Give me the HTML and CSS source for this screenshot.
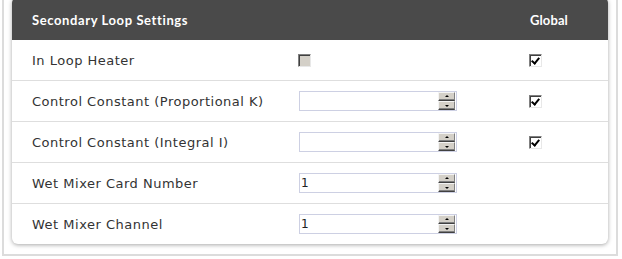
FILE: index.html
```html
<!DOCTYPE html>
<html lang="en">
<head>
  <meta charset="UTF-8" />
  <title>Secondary Loop Settings</title>
  <link rel="stylesheet" href="styles.css">
</head>
<body>

<div class="frame">
  <div class="card">
    <div class="row head">
      <div class="cell label">Secondary Loop Settings</div>
      <div class="cell"></div>
      <div class="cell global">Global</div>
    </div>

    <div class="row">
      <div class="cell label">In Loop Heater</div>
      <div class="cell"><span class="check disabled"></span></div>
      <div class="cell global"><span class="check checked"></span></div>
    </div>

    <div class="row">
      <div class="cell label">Control Constant (Proportional K)</div>
      <div class="cell">
        <div class="spin"><span class="val"></span><span class="btns"><i class="up"></i><i class="down"></i></span></div>
      </div>
      <div class="cell global"><span class="check checked"></span></div>
    </div>

    <div class="row">
      <div class="cell label">Control Constant (Integral I)</div>
      <div class="cell">
        <div class="spin"><span class="val"></span><span class="btns"><i class="up"></i><i class="down"></i></span></div>
      </div>
      <div class="cell global"><span class="check checked"></span></div>
    </div>

    <div class="row">
      <div class="cell label">Wet Mixer Card Number</div>
      <div class="cell">
        <div class="spin"><span class="val">1</span><span class="btns"><i class="up"></i><i class="down"></i></span></div>
      </div>
      <div class="cell global"></div>
    </div>

    <div class="row last">
      <div class="cell label">Wet Mixer Channel</div>
      <div class="cell">
        <div class="spin"><span class="val">1</span><span class="btns"><i class="up"></i><i class="down"></i></span></div>
      </div>
      <div class="cell global"></div>
    </div>
  </div>
</div>

</body>
</html>
```

FILE: styles.css
```css
body {
  margin: 0;
  background: #fff;
  font-family: "DejaVu Sans", sans-serif;
  font-size: 13px;
  letter-spacing: 0.5px;
  color: #333;
}

.frame {
  margin: -4px 0 0 2px;
  padding: 0 8px 10px 8px;
  border: 2px solid #dcdcdc;
  border-top: none;
  width: 596px;
}

.card {
  margin-top: 1px;
  background: #fff;
  border-radius: 6px;
  box-shadow: 0 1px 4px rgba(0,0,0,0.35);
  overflow: hidden;
}

.row {
  display: grid;
  grid-template-columns: 286px 231px 1fr;
  height: 40px;
  border-bottom: 1px solid #dedede;
}

.row.last {
  border-bottom: none;
}

.row.head {
  height: 43px;
  background: #4a4a4a;
  color: #fff;
  font-family: Lato, sans-serif;
  font-size: 13px;
  font-weight: bold;
  letter-spacing: 0.6px;
  border-bottom: none;
  align-items: end;
}

.row.head .cell {
  height: 39px;
  padding-bottom: 1px;
}

.row.head .global {
  padding-left: 1px;
  letter-spacing: 0.1px;
}

.cell {
  display: flex;
  align-items: center;
}

.label {
  padding-left: 20px;
}

.global {
  padding-left: 0;
}

.check {
  width: 13px;
  height: 13px;
  box-sizing: border-box;
  border-top: 1px solid #808080;
  border-left: 1px solid #808080;
  border-right: 1px solid #e8e8e8;
  border-bottom: 1px solid #e8e8e8;
  box-shadow: inset 1px 1px 0 #404040;
  background: #fff;
  position: relative;
}

.check.disabled {
  background: #d4d0c8;
}

.check.checked::after {
  content: "";
  position: absolute;
  left: 3px;
  top: 1px;
  width: 3px;
  height: 6px;
  border-right: 2px solid #000;
  border-bottom: 2px solid #000;
  transform: rotate(40deg);
}

.spin {
  display: flex;
  align-items: center;
  width: 158px;
  height: 20px;
  box-sizing: border-box;
  border: 1px solid #cdd0e3;
  background: #fff;
  margin-left: 1px;
}

.val {
  flex: 1;
  padding-left: 1px;
  color: #222;
  font-size: 12px;
  letter-spacing: 0;
}

.btns {
  display: flex;
  flex-direction: column;
  width: 17px;
  margin-right: 1px;
}

.btns i {
  display: block;
  height: 7px;
  background: #d4d0c8;
  border-top: 1px solid #f4f4f4;
  border-left: 1px solid #f4f4f4;
  border-right: 1px solid #808080;
  border-bottom: 1px solid #404040;
  box-shadow: inset 0 -1px 0 #808080;
  position: relative;
}

.btns i::after {
  content: "";
  position: absolute;
  left: 6px;
  width: 0;
  height: 0;
  border-left: 2px solid transparent;
  border-right: 2px solid transparent;
}

.btns .up::after {
  top: 2px;
  border-bottom: 2px solid #000;
}

.btns .down::after {
  top: 3px;
  border-top: 2px solid #000;
}
```
